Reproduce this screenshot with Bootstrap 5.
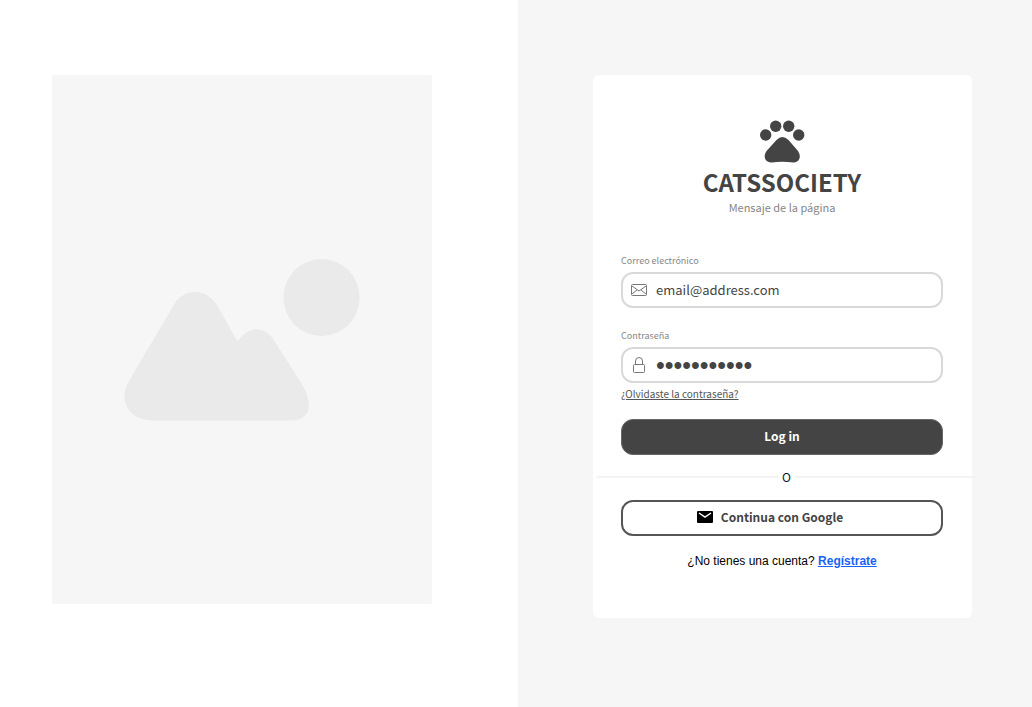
<!DOCTYPE html>
<html lang="es">
<head>
<meta charset="utf-8">
<meta name="viewport" content="width=device-width, initial-scale=1">
<title>CatsSociety</title>
<link href="https://cdn.jsdelivr.net/npm/bootstrap@5.3.0/dist/css/bootstrap.min.css" rel="stylesheet">
<style>
  :root { --ink: #444; --soft: #f6f6f6; }
  body { font-family: "Noto Sans CJK SC", "Open Sans", sans-serif; color: var(--ink); }
  .split { display: grid; grid-template-columns: 50.2% minmax(0, 1fr); }
  .picture-side { padding: 75px 86px 75px 52px; }
  .form-side { padding: 75px 60px 75px 75px; background: var(--soft); }
  .placeholder-pic { background: var(--soft); aspect-ratio: 380 / 529; border-radius: 2px; }
  .login-panel { border-radius: 6px; padding: 44px 29px 48px 28px; }
  .brand { font-size: 24px; line-height: 30px; font-weight: 700; margin-top: 3px; }
  .tagline { font-size: 11px; line-height: 20px; color: #868686; margin-bottom: 36px; }
  .field-label { font-size: 9px; line-height: 16px; color: #868686; margin-bottom: 3px; }
  .field-block { margin-bottom: 20px; }
  .field { height: 36px; border: 2px solid #d9d9d9; border-radius: 12px; padding: 0 9px 0 8px; gap: 9px; }
  .field:focus-within { border-color: #999; }
  .field input { width: 0; font-size: 13px; line-height: 20px; height: 20px; color: var(--ink); outline: 0; }
  .field input[type="password"] { font-family: "Liberation Sans", Arial, sans-serif; font-size: 25px; }
  .forgot { font-size: 10px; line-height: 16px; color: #555; margin: 3px 0 17px; }
  .action { height: 36px; border-radius: 12px; font-size: 12px; line-height: 20px; font-weight: 700; padding: 0 0 2px; }
  .action-dark, .action-dark:hover { background: var(--ink); border: 1px solid #666; color: #fff; }
  .action-line, .action-line:hover { background: #fff; border: 2px solid #555; color: var(--ink); padding-right: 24px; }
  .divider { margin: 12px -33px 13px -24px; line-height: 20px; font-size: 12px; color: #0b1533; gap: 4px; }
  .divider::before, .divider::after { content: ""; flex: 1; height: 2px; background: #f3f3f3; }
  .signup { font-family: "Liberation Sans", Arial, sans-serif; font-size: 12px; line-height: 18px; color: #000; }
  .signup a { color: #1a62f5; }
</style>
</head>
<body>
<main class="split min-vh-100">
  <section class="picture-side bg-white">
    <div class="placeholder-pic">
      <svg class="d-block w-100 h-100" viewBox="0 0 380 529" fill="#eaeaea" role="img" aria-label="Imagen">
        <ellipse cx="269.5" cy="222.500" rx="38" ry="38.500"/>
        <path d="M101 345.500C78 345.500 66 327 76 308C91 281 108 254 123 228C133 213 154 213 165 230C172 242 178 254 185.500 266C198 250 212 251 221 264C231 279 241 295 251 311C261 330 259 345.500 238 345.500Z"/>
      </svg>
    </div>
  </section>
  <section class="form-side">
    <form class="login-panel bg-white">
      <header class="text-center">
        <svg class="d-block mx-auto" width="46" height="45" viewBox="0 0 46 45" fill="#444" aria-hidden="true">
          <circle cx="6.700" cy="16" r="5.700"/><circle cx="16.700" cy="7.200" r="5.700"/><circle cx="29.700" cy="7.200" r="5.700"/><circle cx="39.700" cy="16" r="5.700"/>
          <path d="M17.500 21Q23.300 15 29.500 21L39 32C43 38 40 43.500 34.500 43.500Q23 42 12.500 43.500C6.500 43.500 3.500 38 7.500 32Z"/>
        </svg>
        <h1 class="brand mb-0">CATSSOCIETY</h1>
        <p class="tagline">Mensaje de la página</p>
      </header>
      <div class="field-block">
        <label class="field-label d-block" for="email">Correo electrónico</label>
        <div class="field d-flex align-items-center">
          <svg class="flex-shrink-0" width="16" height="12" viewBox="0 0 16 12" fill="none" stroke="#777" aria-hidden="true"><rect x=".5" y=".5" width="15" height="11" rx="1"/><path d="M1 2L8 7L15 2M1 10L6 6M15 10L10 6"/></svg>
          <input class="border-0 p-0 flex-grow-1 bg-transparent" id="email" type="email" value="email@address.com">
        </div>
      </div>
      <div>
        <label class="field-label d-block" for="password">Contraseña</label>
        <div class="field d-flex align-items-center">
          <svg class="flex-shrink-0" width="16" height="16" viewBox="0 0 16 16" fill="none" stroke="#777" aria-hidden="true"><rect x="2.500" y="7.500" width="11" height="8" rx="1"/><path d="M4.500 7.500V4a3.500 3.500 0 0 1 7 0v3.500"/></svg>
          <input class="border-0 p-0 flex-grow-1 bg-transparent" id="password" type="password" value="contrasena1">
        </div>
      </div>
      <a class="forgot d-block" href="#">¿Olvidaste la contraseña?</a>
      <button class="btn action action-dark w-100" type="submit">Log in</button>
      <div class="divider d-flex align-items-center">O</div>
      <button class="btn action action-line w-100 d-flex align-items-center justify-content-center gap-2" type="button">
        <svg width="16" height="12" viewBox="0 0 16 12" aria-hidden="true"><rect width="16" height="12" rx="1"/><path d="M2 2L8 6L14 2" fill="none" stroke="#fff" stroke-width="1.500"/></svg>
        Continua con Google
      </button>
      <p class="signup text-center mt-3 mb-0">¿No tienes una cuenta? <a class="fw-bold" href="#">Regístrate</a></p>
    </form>
  </section>
</main>
<script src="https://cdn.jsdelivr.net/npm/bootstrap@5.3.0/dist/js/bootstrap.bundle.min.js"></script>
</body>
</html>
